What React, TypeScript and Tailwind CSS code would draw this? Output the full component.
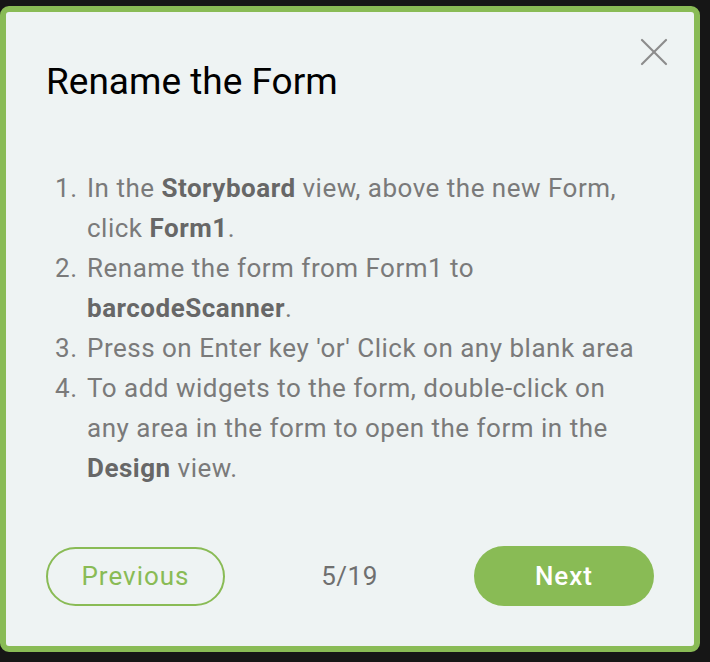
import { X } from 'lucide-react';

// 튜토리얼 단계 목록
const steps = [
  (
    <>
      In the <b className="font-bold text-[#676767]">Storyboard</b> view, above the new Form,
      <br />
      click <b className="font-bold text-[#676767]">Form1</b>.
    </>
  ),
  (
    <>
      Rename the form from Form1 to
      <br />
      <b className="font-bold text-[#676767]">barcodeScanner</b>.
    </>
  ),
  <>Press on Enter key 'or' Click on any blank area</>,
  (
    <>
      To add widgets to the form, double-click on
      <br />
      any area in the form to open the form in the
      <br />
      <b className="font-bold text-[#676767]">Design</b> view.
    </>
  ),
];

export default function App() {
  return (
    <div className="min-h-[662px] w-[710px] bg-[#161616] pt-[6px] font-['Roboto',sans-serif]">
      <div className="relative w-[700px] h-[646px] border-[6px] border-[#89bb55] rounded-[9px] bg-[#eef3f3] px-[40px] pt-[48px] pb-[40px]">
        <button className="absolute top-[16px] right-[16px] text-[#8c8c8c]">
          <X className="w-[48px] h-[48px]" strokeWidth={1.1} />
        </button>

        <h2 className="h-[44px] text-[37px] leading-[44px] text-black">Rename the Form</h2>

        <ol className="mt-[64px] text-[26px] leading-[40px] tracking-[0.5px] text-[#7a7a7a]">
          {steps.map((step, i) => (
            <li key={i} className="flex">
              <span className="w-[41px] pl-[9px] shrink-0">{i + 1}.</span>
              <span className="whitespace-nowrap">{step}</span>
            </li>
          ))}
        </ol>

        <div className="mt-[58px] flex items-center justify-between">
          <button className="w-[179px] h-[59px] rounded-full border-2 border-[#89bb55] text-[26px] tracking-[1px] text-[#89bb55]">
            Previous
          </button>
          <span className="text-[26px] tracking-[0.5px] text-[#6f6f6f]">5/19</span>
          <button className="w-[180px] h-[60px] rounded-full bg-[#89bb55] text-[26px] font-medium tracking-[1px] text-white">
            Next
          </button>
        </div>
      </div>
    </div>
  );
}
